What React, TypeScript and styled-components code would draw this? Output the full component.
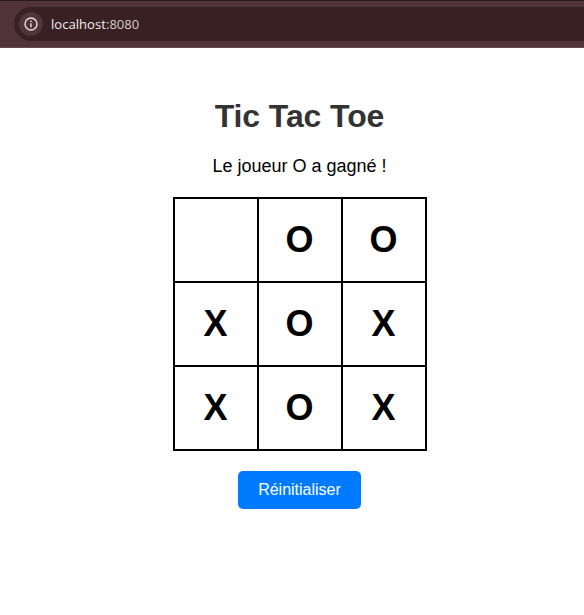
import React from 'react';
import styled, { createGlobalStyle } from 'styled-components';

const GlobalStyle = createGlobalStyle`
  * { box-sizing: border-box; }
  body { margin: 0; background: #fff; font-family: "Liberation Sans", Arial, sans-serif; overflow: hidden; }
`;

const Page = styled.div`
  height: 615px;
  display: flex;
  flex-direction: column;
`;

const BrowserBar = styled.header`
  height: 48px;
  flex: none;
  background: #503439;
  border-top: 1px solid #2c171b;
  border-bottom: 1px solid #624a4f;
  padding: 6px 0 6px 14px;
`;

const AddressField = styled.div`
  height: 34px;
  border-radius: 17px 0 0 17px;
  background: #382023;
  display: flex;
  align-items: center;
  gap: 8px;
  padding-left: 5px;
`;

const InfoBadge = styled.span`
  width: 24px;
  height: 24px;
  border-radius: 50%;
  background: #503439;
  display: flex;
  align-items: center;
  justify-content: center;
`;

const Address = styled.span`
  font: 13px/18px "Open Sans", "Noto Sans", sans-serif;
  letter-spacing: 0.05px;
  color: #f6ecee;
`;

const Port = styled.span`
  color: #d9cbcd;
`;

const Game = styled.main`
  width: 599px;
  display: flex;
  flex-direction: column;
  align-items: center;
`;

const Title = styled.h1`
  margin: 48px 0 0;
  font-size: 32px;
  letter-spacing: -0.1px;
  line-height: 40px;
  color: #333;
`;

const Status = styled.p`
  margin: 20px 0;
  font-size: 18px;
  line-height: 21px;
  color: #000;
`;

const Board = styled.div`
  display: grid;
  grid-template-columns: repeat(3, 82px);
  grid-auto-rows: 82px;
  gap: 2px;
  padding: 2px;
  background: #000;
`;

const Cell = styled.div`
  background: #fff;
  display: flex;
  align-items: center;
  justify-content: center;
  font-size: 36px;
  font-weight: bold;
`;

const ResetButton = styled.button`
  margin-top: 20px;
  width: 123px;
  height: 38px;
  border: 0;
  border-radius: 5px;
  background: #007bff;
  color: #fff;
  padding: 0;
  font: 16px "Liberation Sans", Arial, sans-serif;
`;

const cells = ['', 'O', 'O', 'X', 'O', 'X', 'X', 'O', 'X'];

export default function App() {
  return (
    <Page>
      <GlobalStyle />
      <BrowserBar>
        <AddressField>
          <InfoBadge>
            <svg width="14" height="14" viewBox="0 0 14 14" fill="none" stroke="#e8dcde" strokeWidth="1.4">
              <circle cx="7" cy="7" r="6" />
              <path d="M7 6.2v4M7 3.6v1.5" />
            </svg>
          </InfoBadge>
          <Address>localhost<Port>:8080</Port></Address>
        </AddressField>
      </BrowserBar>
      <Game>
        <Title>Tic Tac Toe</Title>
        <Status>Le joueur O a gagné !</Status>
        <Board>
          {cells.map((mark, i) => <Cell key={i}>{mark}</Cell>)}
        </Board>
        <ResetButton>Réinitialiser</ResetButton>
      </Game>
    </Page>
  );
}
